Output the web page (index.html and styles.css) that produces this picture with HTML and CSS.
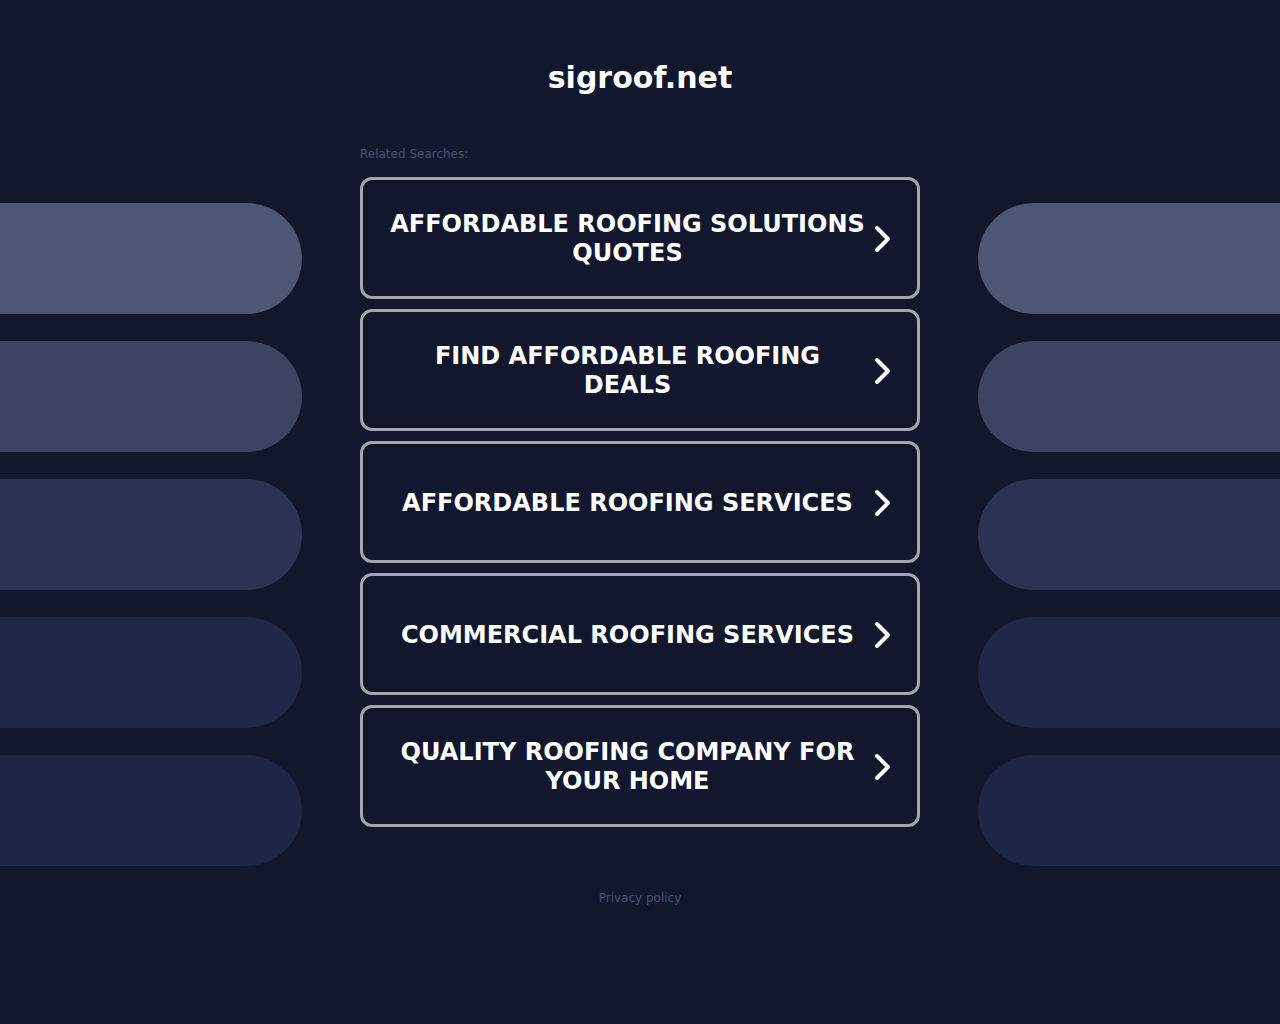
FILE: index.html
```html
<!DOCTYPE html>
<html lang="en">
<head>
<meta charset="utf-8">
<title>sigroof.net</title>
<link rel="stylesheet" href="styles.css">
</head>
<body>
<header class="header">
  <h1 class="site-title">sigroof.net</h1>
</header>
<div class="layout">
  <aside class="pills pills-left">
    <div class="pill p1"></div>
    <div class="pill p2"></div>
    <div class="pill p3"></div>
    <div class="pill p4"></div>
    <div class="pill p5"></div>
  </aside>
  <main class="main">
    <div class="related">Related Searches:</div>
    <div class="links">
      <a class="link" href="#"><span class="link-text">AFFORDABLE ROOFING SOLUTIONS QUOTES</span><svg class="chev" width="18" height="28" viewBox="0 0 18 28"><polyline points="3,3 14,14 3,25" fill="none" stroke="#fff" stroke-width="4" stroke-linecap="round" stroke-linejoin="round"/></svg></a>
      <a class="link" href="#"><span class="link-text">FIND AFFORDABLE ROOFING DEALS</span><svg class="chev" width="18" height="28" viewBox="0 0 18 28"><polyline points="3,3 14,14 3,25" fill="none" stroke="#fff" stroke-width="4" stroke-linecap="round" stroke-linejoin="round"/></svg></a>
      <a class="link" href="#"><span class="link-text">AFFORDABLE ROOFING SERVICES</span><svg class="chev" width="18" height="28" viewBox="0 0 18 28"><polyline points="3,3 14,14 3,25" fill="none" stroke="#fff" stroke-width="4" stroke-linecap="round" stroke-linejoin="round"/></svg></a>
      <a class="link" href="#"><span class="link-text">COMMERCIAL ROOFING SERVICES</span><svg class="chev" width="18" height="28" viewBox="0 0 18 28"><polyline points="3,3 14,14 3,25" fill="none" stroke="#fff" stroke-width="4" stroke-linecap="round" stroke-linejoin="round"/></svg></a>
      <a class="link" href="#"><span class="link-text">QUALITY ROOFING COMPANY FOR YOUR HOME</span><svg class="chev" width="18" height="28" viewBox="0 0 18 28"><polyline points="3,3 14,14 3,25" fill="none" stroke="#fff" stroke-width="4" stroke-linecap="round" stroke-linejoin="round"/></svg></a>
    </div>
  </main>
  <aside class="pills pills-right">
    <div class="pill p1"></div>
    <div class="pill p2"></div>
    <div class="pill p3"></div>
    <div class="pill p4"></div>
    <div class="pill p5"></div>
  </aside>
</div>
<footer class="footer">
  <a class="privacy" href="#">Privacy policy</a>
</footer>
</body>
</html>
```
FILE: styles.css
```css
html, body {
  margin: 0;
  padding: 0;
  background: #12172d;
  min-height: 100%;
}
body {
  font-family: "DejaVu Sans", sans-serif;
  color: #fff;
}
.header {
  padding-top: 60px;
  text-align: center;
}
.site-title {
  margin: 0;
  font-size: 30px;
  line-height: 35px;
  font-weight: bold;
  color: #fff;
}
.layout {
  display: grid;
  grid-template-columns: 1fr 560px 1fr;
  column-gap: 58px;
  margin-top: 52px;
}
.pills {
  display: flex;
  flex-direction: column;
  padding-top: 56px;
  gap: 27px;
}
.pill {
  height: 111px;
}
.pills-left .pill { border-radius: 0 55.5px 55.5px 0; }
.pills-right .pill { border-radius: 55.5px 0 0 55.5px; }
.p1 { background: #4d5673; }
.p2 { background: #3c4461; }
.p3 { background: #2b3352; }
.p4 { background: #1f2846; }
.p5 { background: #1d2645; }
.related {
  font-size: 12px;
  line-height: 14px;
  color: #4b5370;
  margin-bottom: 16px;
}
.links {
  display: flex;
  flex-direction: column;
  gap: 10px;
}
.link {
  display: flex;
  align-items: center;
  height: 122px;
  box-sizing: border-box;
  border: 3px solid #a3a6ad;
  border-radius: 12px;
  padding: 2px 25px 0 26px;
  text-decoration: none;
  color: #fff;
  gap: 8px;
}
.link-text {
  flex: 1;
  text-align: center;
  font-size: 24px;
  line-height: 29px;
  font-weight: bold;
}
.chev {
  flex: none;
}
.footer {
  text-align: center;
  padding-top: 21px;
  padding-bottom: 40px;
}
.privacy {
  font-size: 12px;
  line-height: 14px;
  color: #4b5370;
  text-decoration: none;
}
```
